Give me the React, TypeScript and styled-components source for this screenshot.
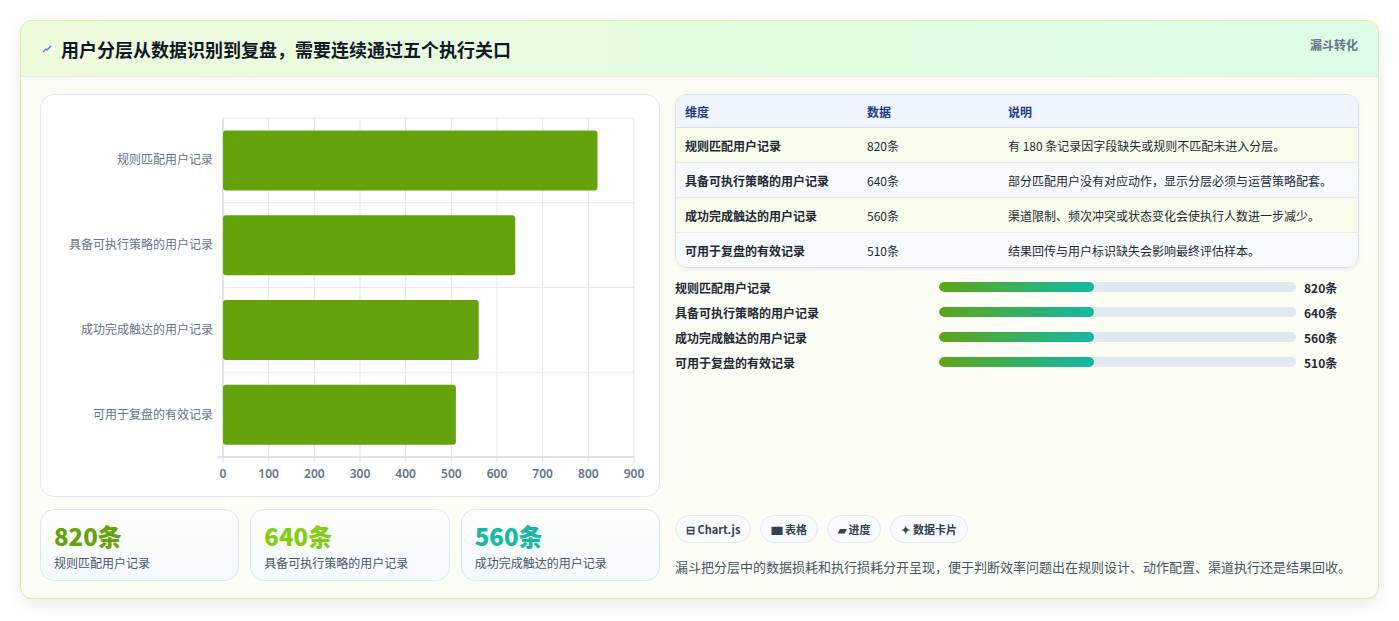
import React from 'react';
import styled, { createGlobalStyle } from 'styled-components';

const GlobalStyle = createGlobalStyle`
  body {
    margin: 0;
    background: #f1f3f4;
    font-family: "Noto Sans CJK SC", "Noto Sans", sans-serif;
  }
`;

interface Stage {
  name: string;
  value: number;
  note: string;
}

const stages: Stage[] = [
  { name: '规则匹配用户记录', value: 820, note: '有 180 条记录因字段缺失或规则不匹配未进入分层。' },
  { name: '具备可执行策略的用户记录', value: 640, note: '部分匹配用户没有对应动作，显示分层必须与运营策略配套。' },
  { name: '成功完成触达的用户记录', value: 560, note: '渠道限制、频次冲突或状态变化会使执行人数进一步减少。' },
  { name: '可用于复盘的有效记录', value: 510, note: '结果回传与用户标识缺失会影响最终评估样本。' },
];

const Page = styled.div`
  padding: 20px 20px 22px 20px;
  background: #fff;
  height: 621px;
  box-sizing: border-box;
`;

const Card = styled.div`
  border: 1px solid #d3ed9c;
  border-radius: 12px;
  overflow: hidden;
  background: #fcfef5;
  box-shadow: 0 6px 18px rgba(0, 0, 0, 0.08);
`;

const Header = styled.div`
  height: 55px;
  display: flex;
  align-items: center;
  justify-content: space-between;
  padding: 0 20px;
  background: linear-gradient(90deg, #eefbdc, #dcfce5);
  border-bottom: 1px solid #e3eed5;
`;

const Title = styled.h1`
  margin: 0;
  font-size: 18px;
  font-weight: 700;
  color: #111827;
  display: flex;
  align-items: center;
  gap: 8px;
`;

const Tag = styled.span`
  font-size: 12px;
  font-weight: 700;
  color: #64748b;
  align-self: flex-start;
  margin-top: 15px;
`;

const Body = styled.div`
  display: grid;
  grid-template-columns: 620px 1fr;
  gap: 15px;
  padding: 17px 19px 17px 19px;
`;

const Column = styled.div`
  display: flex;
  flex-direction: column;
  gap: 12px;
`;

const ChartPanel = styled.div`
  height: 403px;
  background: #fff;
  border: 1px solid #e2e8f0;
  border-radius: 14px;
  box-sizing: border-box;
`;

const Stats = styled.div`
  display: grid;
  grid-template-columns: repeat(3, 1fr);
  gap: 11px;
`;

const StatCard = styled.div`
  height: 72px;
  box-sizing: border-box;
  border: 1px solid #dbe7f3;
  border-radius: 14px;
  background: linear-gradient(180deg, #fcfef8, #f5f9fd);
  padding: 10px 13px;
`;

const StatValue = styled.div<{ $color: string }>`
  font-size: 24px;
  font-weight: 800;
  line-height: 32px;
  color: ${(p) => p.$color};
`;

const StatLabel = styled.div`
  font-size: 12px;
  color: #475569;
  margin-top: 2px;
`;

const RightColumn = styled.div`
  display: flex;
  flex-direction: column;
`;

const Table = styled.table`
  width: 100%;
  border-collapse: separate;
  border-spacing: 0;
  border: 1px solid #d7e1ec;
  border-radius: 12px;
  overflow: hidden;
  font-size: 12px;
  box-shadow: 0 2px 4px rgba(15, 23, 42, 0.06);
`;

const Th = styled.th<{ $w?: number }>`
  text-align: left;
  font-weight: 700;
  color: #1e3a8a;
  background: #eef5fe;
  height: 32px;
  padding: 0 9px;
  border-bottom: 1px solid #d7e1ec;
  width: ${(p) => (p.$w ? `${p.$w}px` : 'auto')};
`;

const Tr = styled.tr<{ $odd: boolean }>`
  background: ${(p) => (p.$odd ? '#f7fdea' : '#f7fafd')};
`;

const Td = styled.td<{ $strong?: boolean }>`
  height: 34px;
  padding: 0 9px;
  color: #1f2937;
  font-weight: ${(p) => (p.$strong ? 600 : 400)};
  border-top: 1px solid #e5ebf1;
  tr:first-child & {
    border-top: none;
  }
`;

const Bars = styled.div`
  display: flex;
  flex-direction: column;
  gap: 7px;
  margin-top: 10px;
`;

const BarRow = styled.div`
  display: grid;
  grid-template-columns: 256px 357px 1fr;
  align-items: center;
  gap: 8px;
  font-size: 12px;
  height: 18px;
  color: #1f2937;
  font-weight: 600;
`;

const Track = styled.div`
  height: 10px;
  border-radius: 5px;
  background: #e2e8f0;
  overflow: hidden;
`;

const Fill = styled.div`
  height: 100%;
  border-radius: 5px;
  background: linear-gradient(90deg, #5ea516, #14b8a6);
`;

const BarValue = styled.span`
  font-weight: 700;
  color: #1f2937;
`;

const Spacer = styled.div`
  flex: 1;
`;

const Chips = styled.div`
  display: flex;
  gap: 9px;
`;

const Chip = styled.span`
  height: 26px;
  padding: 0 10px;
  display: inline-flex;
  align-items: center;
  gap: 4px;
  border: 1px solid #e2e8f0;
  border-radius: 14px;
  background: #f8fafc;
  font-size: 11px;
  font-weight: 600;
  color: #334155;
`;

const Summary = styled.p`
  margin: 14px 0 5px;
  font-size: 13px;
  color: #475569;
`;

const BarChart: React.FC = () => {
  const left = 182;
  const right = 593;
  const top = 23;
  const bottom = 362;
  const band = (bottom - top) / stages.length;
  const sx = (v: number) => left + ((right - left) * v) / 900;
  const ticks = [0, 100, 200, 300, 400, 500, 600, 700, 800, 900];
  return (
    <svg width="618" height="401" viewBox="0 0 618 401">
      {ticks.map((t) => (
        <line key={t} x1={sx(t)} x2={sx(t)} y1={top} y2={bottom + 6} stroke="#e5e7eb" />
      ))}
      {stages.map((_, i) => (
        <line key={i} x1={left} x2={right} y1={top + band * (i + 1)} y2={top + band * (i + 1)} stroke="#e5e7eb" />
      ))}
      <line x1={left} x2={right} y1={top} y2={top} stroke="#e5e7eb" />
      <line x1={left - 6} x2={right} y1={bottom} y2={bottom} stroke="#cbd5e1" />
      <line x1={left} x2={left} y1={top} y2={bottom} stroke="#cbd5e1" />
      {stages.map((s, i) => {
        const cy = top + band * i + band / 2;
        return (
          <g key={s.name}>
            <rect x={left} y={cy - 30} width={sx(s.value) - left} height={60} rx={3} fill="#65a30d" />
            <text x={left - 10} y={cy + 4} textAnchor="end" fontSize="12" fill="#64748b" fontFamily="Noto Sans CJK SC, sans-serif">
              {s.name}
            </text>
          </g>
        );
      })}
      {ticks.map((t) => (
        <text key={t} x={sx(t)} y={bottom + 21} textAnchor="middle" fontSize="12" fontWeight="600" fill="#64748b" fontFamily="Noto Sans, sans-serif">
          {t}
        </text>
      ))}
    </svg>
  );
};

const statColors = ['#65a30d', '#84cc16', '#14b8a6'];

const App: React.FC = () => (
  <>
    <GlobalStyle />
    <Page>
      <Card>
        <Header>
          <Title>
            <svg width="12" height="12" viewBox="0 0 12 12">
              <path d="M2 9 L5 6 L6 7 L10 3" stroke="#3b82f6" strokeWidth="1.4" fill="none" />
            </svg>
            用户分层从数据识别到复盘，需要连续通过五个执行关口
          </Title>
          <Tag>漏斗转化</Tag>
        </Header>
        <Body>
          <Column>
            <ChartPanel>
              <BarChart />
            </ChartPanel>
            <Stats>
              {stages.slice(0, 3).map((s, i) => (
                <StatCard key={s.name}>
                  <StatValue $color={statColors[i]}>{s.value}条</StatValue>
                  <StatLabel>{s.name}</StatLabel>
                </StatCard>
              ))}
            </Stats>
          </Column>
          <RightColumn>
            <Table>
              <thead>
                <tr>
                  <Th $w={164}>维度</Th>
                  <Th $w={123}>数据</Th>
                  <Th>说明</Th>
                </tr>
              </thead>
              <tbody>
                {stages.map((s, i) => (
                  <Tr key={s.name} $odd={i % 2 === 0}>
                    <Td $strong>{s.name}</Td>
                    <Td>{s.value}条</Td>
                    <Td>{s.note}</Td>
                  </Tr>
                ))}
              </tbody>
            </Table>
            <Bars>
              {stages.map((s) => (
                <BarRow key={s.name}>
                  <span>{s.name}</span>
                  <Track>
                    <Fill style={{ width: '43.5%' }} />
                  </Track>
                  <BarValue>{s.value}条</BarValue>
                </BarRow>
              ))}
            </Bars>
            <Spacer />
            <Chips>
              <Chip>⊟ Chart.js</Chip>
              <Chip>▆ 表格</Chip>
              <Chip>▰ 进度</Chip>
              <Chip>✦ 数据卡片</Chip>
            </Chips>
            <Summary>漏斗把分层中的数据损耗和执行损耗分开呈现，便于判断效率问题出在规则设计、动作配置、渠道执行还是结果回收。</Summary>
          </RightColumn>
        </Body>
      </Card>
    </Page>
  </>
);

export default App;
